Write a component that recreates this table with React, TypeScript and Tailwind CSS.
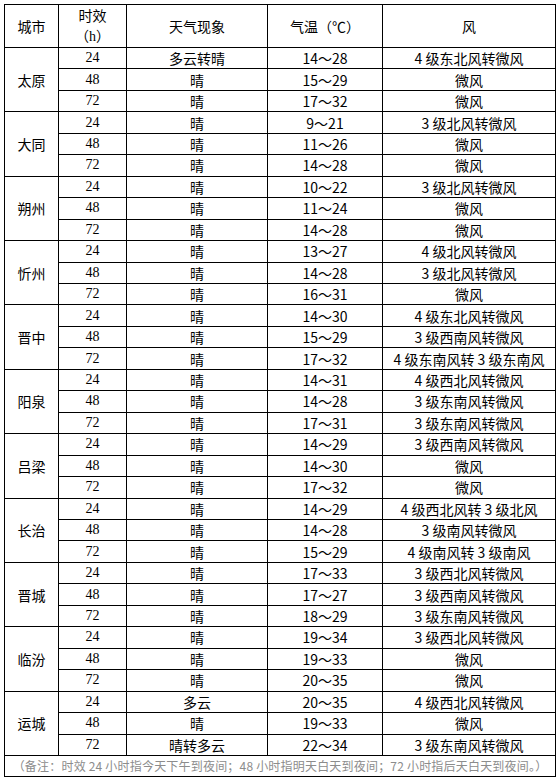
import React from 'react';

type Row = [string, string, string, string];

const cities: { name: string; rows: Row[] }[] = [
  { name: '太原', rows: [['24', '多云转晴', '14～28', '4 级东北风转微风'], ['48', '晴', '15～29', '微风'], ['72', '晴', '17～32', '微风']] },
  { name: '大同', rows: [['24', '晴', '9～21', '3 级北风转微风'], ['48', '晴', '11～26', '微风'], ['72', '晴', '14～28', '微风']] },
  { name: '朔州', rows: [['24', '晴', '10～22', '3 级北风转微风'], ['48', '晴', '11～24', '微风'], ['72', '晴', '14～28', '微风']] },
  { name: '忻州', rows: [['24', '晴', '13～27', '4 级北风转微风'], ['48', '晴', '14～28', '3 级北风转微风'], ['72', '晴', '16～31', '微风']] },
  { name: '晋中', rows: [['24', '晴', '14～30', '4 级东北风转微风'], ['48', '晴', '15～29', '3 级西南风转微风'], ['72', '晴', '17～32', '4 级东南风转 3 级东南风']] },
  { name: '阳泉', rows: [['24', '晴', '14～31', '4 级西北风转微风'], ['48', '晴', '14～28', '3 级东南风转微风'], ['72', '晴', '17～31', '3 级东南风转微风']] },
  { name: '吕梁', rows: [['24', '晴', '14～29', '3 级西南风转微风'], ['48', '晴', '14～30', '微风'], ['72', '晴', '17～32', '微风']] },
  { name: '长治', rows: [['24', '晴', '14～29', '4 级西北风转 3 级北风'], ['48', '晴', '14～28', '3 级南风转微风'], ['72', '晴', '15～29', '4 级南风转 3 级南风']] },
  { name: '晋城', rows: [['24', '晴', '17～33', '3 级西北风转微风'], ['48', '晴', '17～27', '3 级西南风转微风'], ['72', '晴', '18～29', '3 级东南风转微风']] },
  { name: '临汾', rows: [['24', '晴', '19～34', '3 级西北风转微风'], ['48', '晴', '19～33', '微风'], ['72', '晴', '20～35', '微风']] },
  { name: '运城', rows: [['24', '多云', '20～35', '4 级西北风转微风'], ['48', '晴', '19～33', '微风'], ['72', '晴转多云', '22～34', '3 级东南风转微风']] },
];

const cell = 'bg-white flex items-center justify-center leading-none';

const App: React.FC = () => {
  return (
    <div className="min-h-[783px] w-[560px] bg-white pt-[4px] pl-[4px] text-[14px] text-black font-['Noto_Sans_CJK_SC',sans-serif]">
      <div className="grid h-[773px] w-[552px] grid-cols-[53px_67px_140px_114px_172px] grid-rows-[42px_repeat(33,minmax(0,1fr))_20px] gap-px border border-black bg-black">
        {/* Header */}
        <div className={cell}>城市</div>
        <div className={`${cell} flex-col gap-[6px]`}>
          <span>时效</span>
          <span>
            （<span className="font-['Liberation_Serif',serif]">h</span>）
          </span>
        </div>
        <div className={cell}>天气现象</div>
        <div className={cell}>气温（℃）</div>
        <div className={cell}>风</div>

        {cities.map((c) => (
          <React.Fragment key={c.name}>
            <div className={`${cell} row-span-3`}>{c.name}</div>
            {c.rows.map((r) => (
              <React.Fragment key={c.name + r[0]}>
                <div className={`${cell} font-['Liberation_Serif',serif] text-[14px]`}>{r[0]}</div>
                <div className={cell}>{r[1]}</div>
                <div className={cell}>{r[2]}</div>
                <div className={cell}>{r[3]}</div>
              </React.Fragment>
            ))}
          </React.Fragment>
        ))}

        {/* Note */}
        <div className={`${cell} col-span-5 text-[12px] tracking-[0.2px] text-[#8c8c8c]`}>
          （备注：时效 24 小时指今天下午到夜间；48 小时指明天白天到夜间；72 小时指后天白天到夜间。）
        </div>
      </div>
    </div>
  );
};

export default App;
